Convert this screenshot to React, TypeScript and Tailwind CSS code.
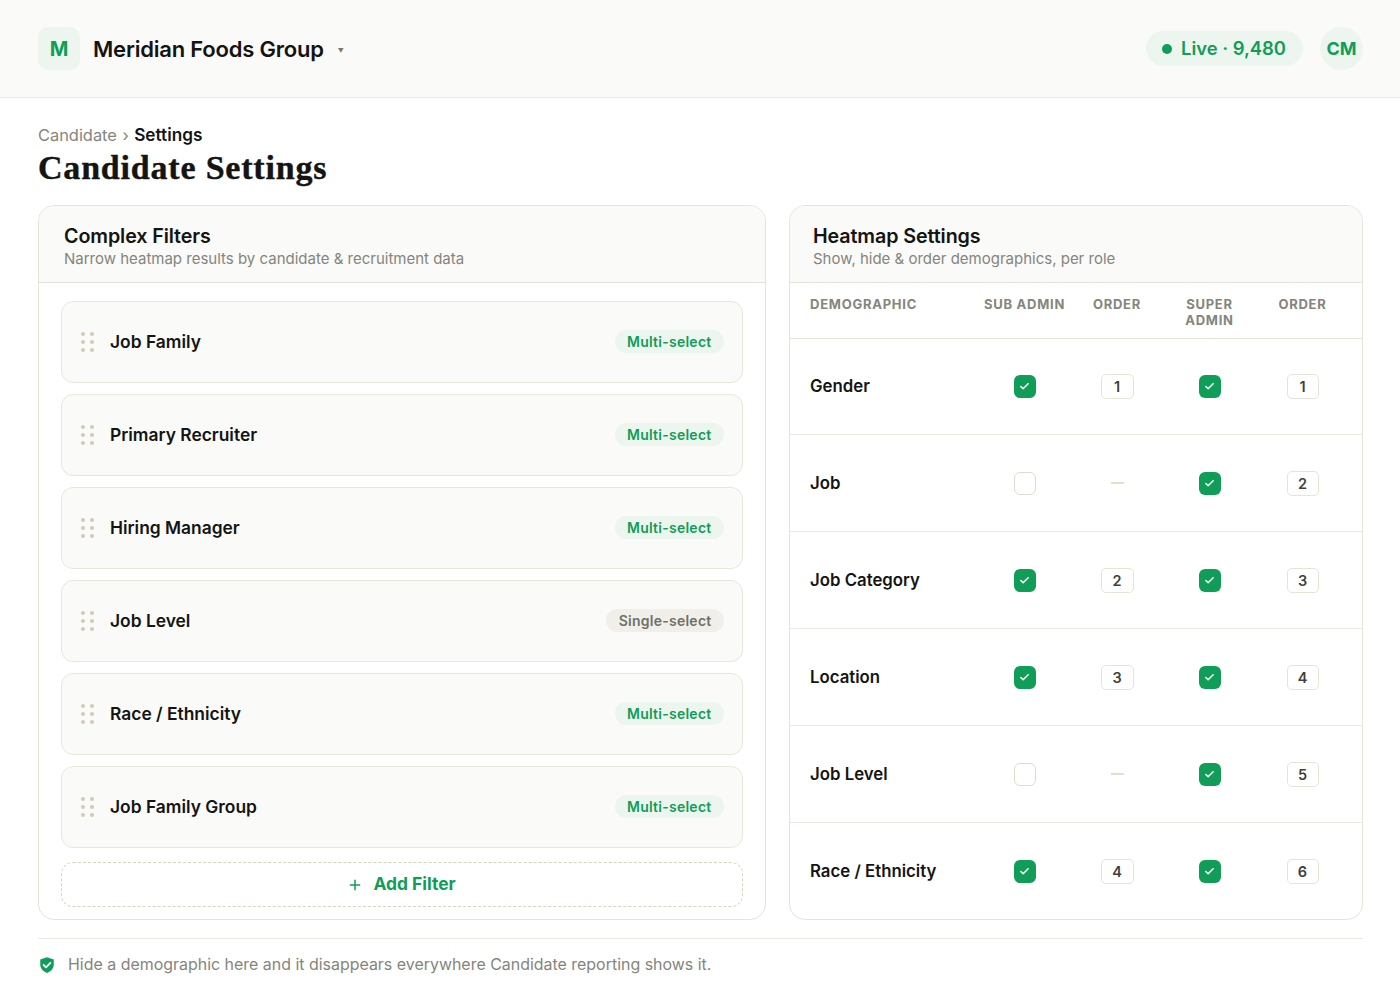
import React from 'react';
import { Check, Plus } from 'lucide-react';

const filters = [
  { name: 'Job Family', kind: 'Multi-select' },
  { name: 'Primary Recruiter', kind: 'Multi-select' },
  { name: 'Hiring Manager', kind: 'Multi-select' },
  { name: 'Job Level', kind: 'Single-select' },
  { name: 'Race / Ethnicity', kind: 'Multi-select' },
  { name: 'Job Family Group', kind: 'Multi-select' },
];

const rows: { name: string; sub: number | null; sup: number }[] = [
  { name: 'Gender', sub: 1, sup: 1 },
  { name: 'Job', sub: null, sup: 2 },
  { name: 'Job Category', sub: 2, sup: 3 },
  { name: 'Location', sub: 3, sup: 4 },
  { name: 'Job Level', sub: null, sup: 5 },
  { name: 'Race / Ethnicity', sub: 4, sup: 6 },
];

const DragHandle = () => (
  <div className="grid grid-cols-2 gap-x-[5px] gap-y-[4px] w-[12px] shrink-0">
    {[0, 1, 2, 3, 4, 5].map(i => (
      <span key={i} className="w-[4px] h-[4px] rounded-full bg-[#cfcbb8]" />
    ))}
  </div>
);

const Checkbox = ({ on }: { on: boolean }) =>
  on ? (
    <span className="w-[22px] h-[23px] rounded-[6px] bg-[#0f9d58] flex items-center justify-center">
      <Check size={11} strokeWidth={3.4} className="text-white" />
    </span>
  ) : (
    <span className="w-[22px] h-[23px] rounded-[6px] bg-white border border-[#dedbd0]" />
  );

const OrderBox = ({ value, wide }: { value: number | null; wide?: boolean }) =>
  value === null ? (
    <span className="w-[13px] h-[2px] bg-[#e3dfcc]" />
  ) : (
    <span
      className={`${wide ? 'w-[33px]' : 'w-[32px]'} h-[25px] pt-[1px] rounded-[5px] bg-white border border-[#e6e3d9] flex items-center justify-center text-[14.5px] font-semibold text-[#3f3f3c]`}
    >
      {value}
    </span>
  );

const App: React.FC = () => {
  return (
    <div className="w-[1400px] h-[1000px] overflow-hidden bg-white text-[#141412] font-['Inter',sans-serif]">
      <header className="h-[98px] bg-[#fafaf8] border-b border-[#eceadb] pl-[38px] pr-[37px] flex items-center justify-between">
        <div className="flex items-center">
          <div className="w-[42px] h-[43px] rounded-[10px] bg-[#edf5ef] flex items-center justify-center text-[20px] font-bold text-[#0f9d58]">
            M
          </div>
          <span className="ml-[13px] mt-[1px] text-[22px] font-semibold tracking-[-0.2px]">Meridian Foods Group</span>
          <span className="ml-[14px] mt-[3px] text-[6px] text-[#77776f]">▼</span>
        </div>
        <div className="flex items-center gap-[17px]">
          <div className="h-[35px] w-[157px] rounded-full bg-[#edf5ef] flex items-center justify-center gap-[9px] pr-[1px] text-[#0f9d58] text-[18.4px] font-semibold">
            <span className="w-[10px] h-[10px] rounded-full bg-[#0f9d58]" />
            Live · 9,480
          </div>
          <div className="w-[43px] h-[43px] rounded-full bg-[#edf5ef] flex items-center justify-center text-[#0f9d58] text-[18px] font-bold">
            CM
          </div>
        </div>
      </header>

      <main className="pl-[38px] pr-[37px]">
        <div className="mt-[27px] text-[16.4px] leading-[20px] flex items-center">
          <span className="text-[#85857d]">Candidate</span>
          <span className="mx-[5.5px] text-[#85857d]">›</span>
          <span className="font-semibold text-[17.2px]">Settings</span>
        </div>
        <h1 className="mt-[2px] text-[34px] leading-[42px] font-bold tracking-[0.8px] [-webkit-text-stroke:0.4px_#141412] font-['Liberation_Serif',serif]">
          Candidate Settings
        </h1>

        <div className="mt-[16px] grid grid-cols-[728px_574px] gap-[23px]">
          <section className="h-[715px] rounded-[16px] border border-[#e6e3d9] overflow-hidden">
            <div className="h-[77px] bg-[#fafaf8] border-b border-[#e6e3d9] pl-[25px] pt-[19px]">
              <h2 className="text-[19.7px] leading-[22px] font-semibold tracking-[-0.1px]">Complex Filters</h2>
              <p className="mt-[2px] text-[15px] leading-[20px] text-[#85857d]">
                Narrow heatmap results by candidate &amp; recruitment data
              </p>
            </div>
            <div className="px-[22px] pt-[18px] flex flex-col gap-[11px]">
              {filters.map(f => (
                <div
                  key={f.name}
                  className="h-[82px] rounded-[12px] bg-[#fafaf8] border border-[#e9e6da] pl-[19px] pr-[18px] flex items-center justify-between"
                >
                  <div className="flex items-center gap-[17px]">
                    <DragHandle />
                    <span className="mt-[1px] text-[17.4px] font-semibold">{f.name}</span>
                  </div>
                  <span
                    className={`h-[23px] mb-[2px] px-[12.5px] rounded-full flex items-center text-[14px] font-semibold tracking-[0.25px] ${
                      f.kind === 'Multi-select' ? 'bg-[#edf5ef] text-[#0f9d58]' : 'bg-[#f1efea] text-[#6f6f67]'
                    }`}
                  >
                    {f.kind}
                  </span>
                </div>
              ))}
              <button className="mt-[3px] h-[45px] rounded-[12px] border border-dashed border-[#d8d4bf] flex items-center justify-center gap-[10px] pr-[1px] text-[#0f9d58] text-[17.4px] font-bold">
                <Plus size={16} strokeWidth={2.2} />
                Add Filter
              </button>
            </div>
          </section>

          <section className="h-[715px] rounded-[16px] border border-[#e6e3d9] overflow-hidden">
            <div className="h-[77px] bg-[#fafaf8] border-b border-[#e6e3d9] pl-[23px] pt-[19px]">
              <h2 className="text-[19.7px] leading-[22px] font-semibold tracking-[-0.1px]">Heatmap Settings</h2>
              <p className="mt-[2px] text-[15px] leading-[20px] text-[#85857d]">
                Show, hide &amp; order demographics, per role
              </p>
            </div>
            <div className="h-[56px] border-b border-[#e6e3d9] pl-[20px] pr-[13px] pt-[13px] grid grid-cols-[1fr_93px_92px_93px_93px] text-[13px] leading-[16px] font-bold tracking-[0.75px] text-[#85857d]">
              <span>DEMOGRAPHIC</span>
              <span className="text-center whitespace-nowrap">SUB ADMIN</span>
              <span className="text-center">ORDER</span>
              <span className="text-center">
                SUPER
                <br />
                ADMIN
              </span>
              <span className="text-center">ORDER</span>
            </div>
            {rows.map((r, i) => (
              <div
                key={r.name}
                className={`${i === 0 ? 'h-[96px]' : 'h-[97px]'} pl-[20px] pr-[13px] grid grid-cols-[1fr_93px_92px_93px_93px] items-center ${
                  i < rows.length - 1 ? 'border-b border-[#ebe9e1]' : ''
                }`}
              >
                <span className="mt-[1px] text-[16.8px] font-semibold">{r.name}</span>
                <span className="flex justify-center">
                  <Checkbox on={r.sub !== null} />
                </span>
                <span className="flex justify-center">
                  <OrderBox value={r.sub} wide />
                </span>
                <span className="flex justify-center">
                  <Checkbox on />
                </span>
                <span className="flex justify-center">
                  <OrderBox value={r.sup} />
                </span>
              </div>
            ))}
          </section>
        </div>

        <footer className="mt-[18px] border-t border-[#ebe9e1] pt-[14px] flex items-center gap-[12px]">
          <svg width="18" height="18" viewBox="0 0 24 24" className="shrink-0">
            <path d="M12 1.5 3 4.8v6.6c0 5.4 3.8 9.6 9 11.1 5.2-1.5 9-5.7 9-11.1V4.8L12 1.5Z" fill="#0f9d58" />
            <path d="m7.5 12 3.2 3.2 5.8-6" fill="none" stroke="#fff" strokeWidth="2.4" strokeLinecap="round" strokeLinejoin="round" />
          </svg>
          <p className="text-[15.95px] leading-[24px] text-[#85857d]">
            Hide a demographic here and it disappears everywhere Candidate reporting shows it.
          </p>
        </footer>
      </main>
    </div>
  );
};

export default App;
